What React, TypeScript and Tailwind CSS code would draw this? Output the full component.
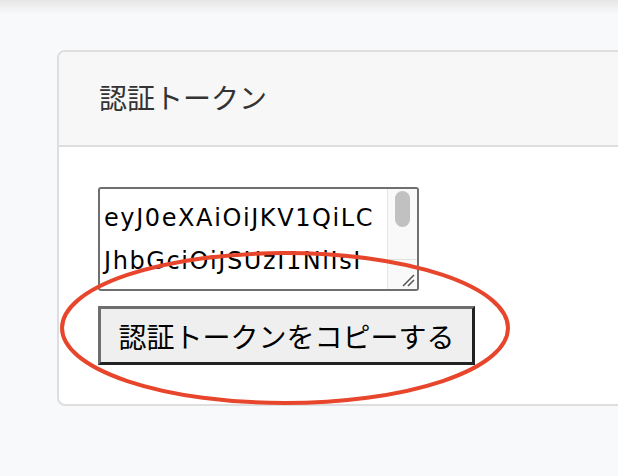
const tokenLines = ['eyJ0eXAiOiJKV1QiLC', 'JhbGciOiJSUzI1NiIsI', 'nR5cCI6IkpXVCJ9']

const ResizeGrip = () => (
	<svg width="14" height="14" viewBox="0 0 14 14" className="absolute bottom-[2px] right-[2px]">
		<path d="M2 13 L13 2 M7 13 L13 7" stroke="#555" strokeWidth="1.5" />
	</svg>
)

export default function App() {
	return (
		<div className="relative min-h-[476px] w-[618px] overflow-hidden bg-[#f8f9fa] font-['Noto_Sans','Noto_Sans_CJK_JP',sans-serif]">
			<div className="h-[14px] bg-gradient-to-b from-[#e6e6e6] to-[#f8f9fa]" />

			<div className="ml-[57px] mt-[36px] w-[600px] rounded-[8px] border-2 border-[#dedede] bg-white">
				<div className="flex h-[95px] items-center rounded-t-[6px] border-b-2 border-[#dedede] bg-[#f7f7f7] pb-[4px] pl-[40px]">
					<h2 className="font-['Noto_Sans_CJK_JP',sans-serif] text-[28px] leading-none font-normal text-[#333]">認証トークン</h2>
				</div>

				<div className="px-[39px] pt-[40px] pb-[39px]">
					<div className="relative flex h-[104px] w-[321px] overflow-hidden rounded-[3px] border-2 border-[#6f6f6f] bg-white">
						<div className="flex-1 overflow-hidden whitespace-nowrap pl-[4px] pt-[8px] font-['DejaVu_Sans',sans-serif] text-[24px] leading-[43px] tracking-[1.6px] text-black">
							{tokenLines.map((line) => (
								<div key={line}>{line}</div>
							))}
						</div>
						<div className="relative flex w-[30px] flex-col border-l border-[#e6e6e6] bg-[#f9f9f9]">
							<div className="mx-auto mt-[2px] h-[36px] w-[15px] rounded-full bg-[#c1c1c1]" />
							<div className="mt-auto h-[30px] border-t border-[#e0e0e0]" />
							<ResizeGrip />
						</div>
					</div>

					<button className="mt-[15px] h-[59px] w-[377px] border-[3px] border-t-[#6e6e6e] border-l-[#6e6e6e] border-b-[#222] border-r-[#222] bg-[#efefef] font-['Noto_Sans_CJK_JP',sans-serif] text-[28px] leading-none text-black">
						認証トークンをコピーする
					</button>
				</div>
			</div>

			<svg className="pointer-events-none absolute left-0 top-0" width="618" height="476">
				<ellipse cx="285" cy="328" rx="223" ry="75" fill="none" stroke="#e8462c" strokeWidth="4" />
			</svg>
		</div>
	)
}
